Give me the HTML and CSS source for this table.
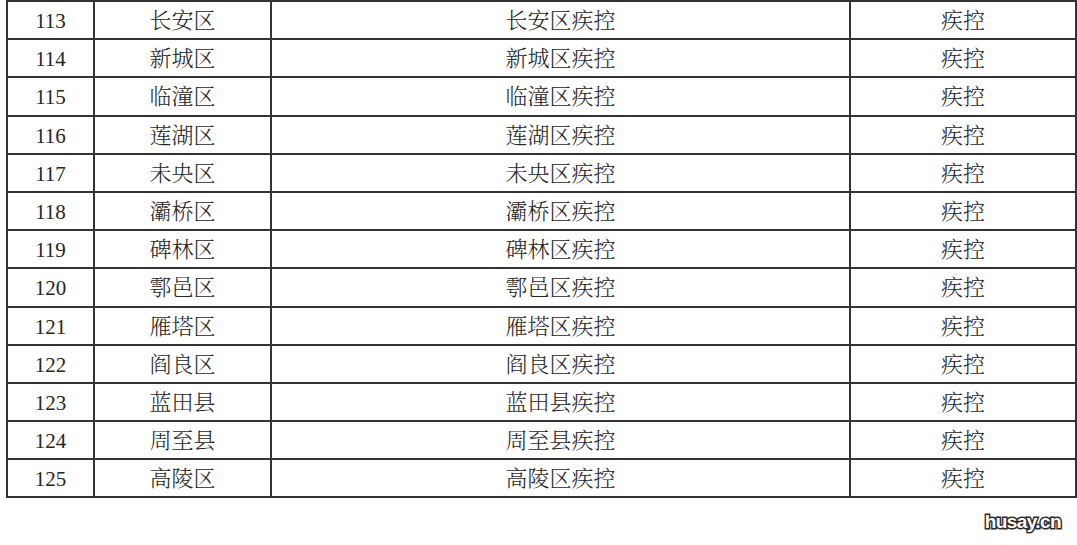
FILE: index.html
```html
<!DOCTYPE html>
<html lang="zh-CN">
<head>
<meta charset="utf-8">
<title>疾控列表</title>
<link rel="stylesheet" href="styles.css">
</head>
<body>
<div class="page">
  <table class="list">
    <colgroup>
      <col class="c-num"><col class="c-area"><col class="c-name"><col class="c-type">
    </colgroup>
    <tbody>
      <tr><td class="num">113</td><td>长安区</td><td>长安区疾控</td><td>疾控</td></tr>
      <tr><td class="num">114</td><td>新城区</td><td>新城区疾控</td><td>疾控</td></tr>
      <tr><td class="num">115</td><td>临潼区</td><td>临潼区疾控</td><td>疾控</td></tr>
      <tr><td class="num">116</td><td>莲湖区</td><td>莲湖区疾控</td><td>疾控</td></tr>
      <tr><td class="num">117</td><td>未央区</td><td>未央区疾控</td><td>疾控</td></tr>
      <tr><td class="num">118</td><td>灞桥区</td><td>灞桥区疾控</td><td>疾控</td></tr>
      <tr><td class="num">119</td><td>碑林区</td><td>碑林区疾控</td><td>疾控</td></tr>
      <tr><td class="num">120</td><td>鄠邑区</td><td>鄠邑区疾控</td><td>疾控</td></tr>
      <tr><td class="num">121</td><td>雁塔区</td><td>雁塔区疾控</td><td>疾控</td></tr>
      <tr><td class="num">122</td><td>阎良区</td><td>阎良区疾控</td><td>疾控</td></tr>
      <tr><td class="num">123</td><td>蓝田县</td><td>蓝田县疾控</td><td>疾控</td></tr>
      <tr><td class="num">124</td><td>周至县</td><td>周至县疾控</td><td>疾控</td></tr>
      <tr><td class="num">125</td><td>高陵区</td><td>高陵区疾控</td><td>疾控</td></tr>
    </tbody>
  </table>
  <div class="footer"><span class="mark">husay.cn</span></div>
</div>
</body>
</html>
```

FILE: styles.css
```css
html, body {
  margin: 0;
  padding: 0;
  background: #ffffff;
}

.page {
  width: 1077px;
  height: 545px;
  overflow: hidden;
}

.list {
  margin-left: 6px;
  width: 1069px;
  border-collapse: collapse;
  table-layout: fixed;
  font-family: "Liberation Serif", "Noto Serif CJK SC", "Noto Sans CJK SC", serif;
  font-size: 22px;
  font-weight: 300;
  color: #262626;
}

.c-num { width: 87px; }
.c-area { width: 177px; }
.c-name { width: 579px; }
.c-type { width: 226px; }

.list tr {
  height: 38.2px;
}

.list td {
  border: 2px solid #333333;
  padding: 2px 0 0;
  text-align: center;
  vertical-align: middle;
  line-height: 34px;
}

.list td.num {
  font-size: 21px;
  font-weight: 400;
}

.footer {
  display: flex;
  justify-content: flex-end;
  padding: 13px 16px 0 0;
}

.mark {
  font-family: "Liberation Sans", Arial, sans-serif;
  font-weight: 700;
  font-size: 19px;
  letter-spacing: -0.6px;
  color: #ffffff;
  -webkit-text-stroke: 3px #2b2b2b;
  paint-order: stroke fill;
}
```
